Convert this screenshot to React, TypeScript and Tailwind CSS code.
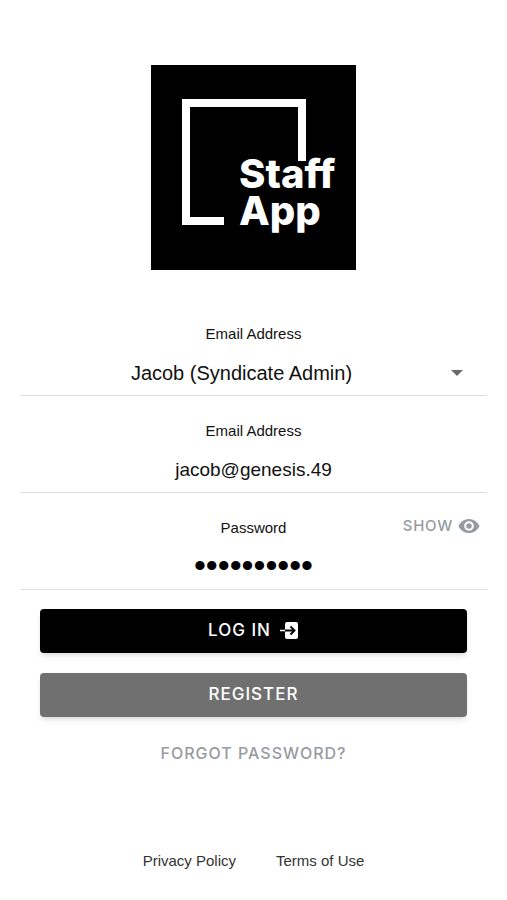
import { useState, type ReactNode } from "react";
import { IoMdEye } from "react-icons/io";

const accounts = ["Jacob (Syndicate Admin)"];

function Logo() {
  return (
    <svg
      viewBox="0 0 205 205"
      className="mx-auto block w-[205px] bg-black"
      role="img"
      aria-label="Staff App"
    >
      <path
        d="M73 156H35V38H151V96"
        fill="none"
        stroke="white"
        strokeWidth="8"
      />
      <g fill="white" className="font-['Inter',sans-serif] text-[40px] font-extrabold">
        <text x="88" y="123">Staff</text>
        <text x="88" y="160">App</text>
      </g>
    </svg>
  );
}

function LogInIcon() {
  return (
    <svg viewBox="0 0 20 20" className="h-5 w-5" aria-hidden="true">
      <rect x="6" y="1" width="13" height="17" rx="2" fill="white" />
      <path d="M1 9.500H6" stroke="white" strokeWidth="1.500" />
      <path
        d="M6 9.500H15M11.500 5.500L15.500 9.500L11.500 13.500"
        fill="none"
        stroke="black"
        strokeWidth="1.900"
      />
    </svg>
  );
}

function Field({
  id,
  label,
  action,
  children,
}: {
  id: string;
  label: string;
  action?: ReactNode;
  children: ReactNode;
}) {
  return (
    <div className="border-b border-[#dedede] pt-[25px]">
      <div className="grid h-5 grid-cols-[1fr_auto_1fr] items-start">
        <label htmlFor={id} className="col-start-2 text-[15px] leading-5">
          {label}
        </label>
        {action}
      </div>
      <div className="relative mt-2">{children}</div>
    </div>
  );
}

export default function App() {
  const [email, setEmail] = useState("jacob@genesis.49");
  const [password, setPassword] = useState("genesis049");
  const [visible, setVisible] = useState(false);

  return (
    <div className="min-h-screen bg-white pt-[65px] font-['Liberation_Sans',Arial,sans-serif] text-[#111]">
      <Logo />

      <form className="mt-[29px]" onSubmit={(e) => e.preventDefault()}>
        <div className="px-5">
          <Field id="account" label="Email Address">
            <select
              id="account"
              className="block h-[43px] w-full appearance-none bg-transparent pr-6 pb-0.5 text-center text-xl [text-align-last:center] outline-none"
            >
              {accounts.map((account) => (
                <option key={account}>{account}</option>
              ))}
            </select>
            <svg
              viewBox="0 0 12 6"
              className="pointer-events-none absolute top-[18px] right-6 w-3 fill-[#6b6b6b]"
              aria-hidden="true"
            >
              <path d="M0 0H12L6 6Z" />
            </svg>
          </Field>

          <Field id="email" label="Email Address">
            <input
              id="email"
              type="email"
              value={email}
              onChange={(e) => setEmail(e.target.value)}
              className="block h-[43px] w-full bg-transparent pb-0.5 text-center text-[19px] outline-none"
            />
          </Field>

          <Field
            id="password"
            label="Password"
            action={
              <button
                type="button"
                onClick={() => setVisible(!visible)}
                className="-mt-1 mr-[6px] flex h-6 items-center gap-1 justify-self-end font-['Inter',sans-serif] text-[15px] leading-5 font-medium tracking-wider text-[#989aa2]"
              >
                SHOW
                <IoMdEye className="h-6 w-6" aria-hidden="true" />
              </button>
            }
          >
            <input
              id="password"
              type={visible ? "text" : "password"}
              value={password}
              onChange={(e) => setPassword(e.target.value)}
              className={`block h-[43px] w-full bg-transparent pb-1 text-center text-black outline-none ${
                visible ? "text-[19px]" : "text-[34px]"
              }`}
            />
          </Field>
        </div>

        <div className="flex flex-col gap-5 px-10 pt-[19px] font-['Inter',sans-serif] text-[17px] font-medium tracking-[1px]">
          <button
            type="submit"
            className="flex h-11 items-center justify-center gap-2 rounded bg-black text-white shadow-md"
          >
            LOG IN
            <LogInIcon />
          </button>
          <button
            type="button"
            className="h-11 rounded bg-[#707070] text-white shadow-md"
          >
            REGISTER
          </button>
          <button type="button" className="mt-1 h-6 text-base text-[#989aa2]">
            FORGOT PASSWORD?
          </button>
        </div>
      </form>

      <footer className="mt-[86px] flex justify-center gap-10 pb-7 text-[15px] leading-5 text-[#333]">
        <a href="#privacy">Privacy Policy</a>
        <a href="#terms">Terms of Use</a>
      </footer>
    </div>
  );
}
